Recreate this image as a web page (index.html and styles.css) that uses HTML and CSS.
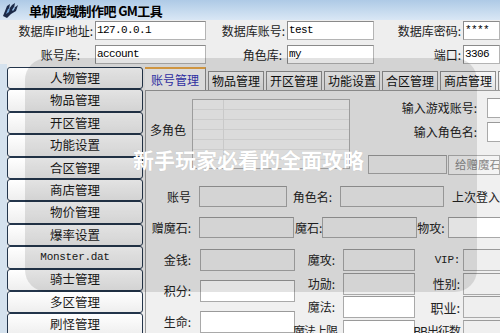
FILE: index.html
```html
<!DOCTYPE html>
<html lang="zh">
<head>
<meta charset="utf-8">
<title>单机魔域制作吧 GM工具</title>
<link rel="stylesheet" href="styles.css">
</head>
<body>
<div class="win">
  <div class="titlebar">
    <svg class="logo" width="18" height="17" viewBox="0 0 18 17">
      <path d="M1 14 L5 4 L8 2 L7 7 L10 3 L13 1 L12 6 L16 3 L14 9 L9 12 L5 16 Z" fill="#1c2a48"/>
      <path d="M4 12 L6 7 L8 6 L7 10 Z" fill="#6fa3d8"/>
      <path d="M10 8 L12 5 L13 6 L11 9 Z" fill="#9cc4ec"/>
    </svg>
    <span class="ttl">单机魔域制作吧 GM工具</span>
  </div>

  <div class="dbform">
    <span class="lbl">数据库IP地址:</span>
    <div class="tb">127.0.0.1</div>
    <span class="lbl">数据库账号:</span>
    <div class="tb">test</div>
    <span class="lbl">数据库密码:</span>
    <div class="tb">****</div>
    <span class="lbl lbl-short">账号库:</span>
    <div class="tb">account</div>
    <span class="lbl lbl-r2">角色库:</span>
    <div class="tb">my</div>
    <span class="lbl">端口:</span>
    <div class="tb">3306</div>
  </div>

  <div class="main">
    <div class="side">
      <div class="sbtn">人物管理</div>
      <div class="sbtn">物品管理</div>
      <div class="sbtn">开区管理</div>
      <div class="sbtn">功能设置</div>
      <div class="sbtn">合区管理</div>
      <div class="sbtn">商店管理</div>
      <div class="sbtn">物价管理</div>
      <div class="sbtn">爆率设置</div>
      <div class="sbtn mono">Monster.dat</div>
      <div class="sbtn">骑士管理</div>
      <div class="sbtn">多区管理</div>
      <div class="sbtn">刷怪管理</div>
    </div>

    <div class="tabs">
      <div class="tabstrip">
        <div class="tab on">账号管理</div>
        <div class="tab">物品管理</div>
        <div class="tab">开区管理</div>
        <div class="tab">功能设置</div>
        <div class="tab">合区管理</div>
        <div class="tab">商店管理</div>
        <div class="tab tab-more"></div>
      </div>
      <div class="panel">
        <div class="top">
          <div class="multi">
            <span class="multi-lbl">多角色</span>
            <div class="listbox"></div>
          </div>
          <div class="search">
            <div class="srow"><span class="slbl">输入游戏账号:</span><div class="in w sin"></div></div>
            <div class="srow"><span class="slbl">输入角色名:</span><div class="in w sin"></div></div>
            <div class="gift">
              <div class="in gin"></div>
              <div class="gbtn">给赠魔石</div>
            </div>
          </div>
        </div>

        <div class="row r-acc">
          <span class="l1">账号</span>
          <div class="in a1"></div>
          <span class="l2">角色名:</span>
          <div class="in a2"></div>
          <span class="l3">上次登入</span>
        </div>

        <div class="row r-gem">
          <span class="l1">赠魔石:</span>
          <div class="in g1"></div>
          <span class="lg2">魔石:</span>
          <div class="in g2"></div>
          <span class="lg3">物攻:</span>
          <div class="in w g3"></div>
        </div>

        <div class="stats">
          <div class="lcol">
            <div class="lrow"><span class="l1">金钱:</span><div class="in s1"></div></div>
            <div class="lrow"><span class="l1">积分:</span><div class="in w s1"></div></div>
            <div class="lrow"><span class="l1">生命:</span><div class="in w s1"></div></div>
          </div>
          <div class="rcol">
            <div class="rrow"><span class="m1">魔攻:</span><div class="in m2"></div><span class="m3 mono">VIP:</span><div class="in m4"></div></div>
            <div class="rrow"><span class="m1">功勋:</span><div class="in m2"></div><span class="m3">性别:</span><div class="in m4"></div></div>
            <div class="rrow"><span class="m1">魔法:</span><div class="in w m2"></div><span class="m3 big">职业:</span><div class="in m4"></div></div>
            <div class="rrow"><span class="m1 tight">魔法上限</span><div class="in w m2"></div><span class="m3 tight">BB出征数</span><div class="in m4"></div></div>
          </div>
        </div>
      </div>
    </div>
  </div>

  <div class="shade"></div>
  <div class="promo">新手玩家必看的全面攻略</div>
</div>
</body>
</html>
```

FILE: styles.css
```css
html, body {
  margin: 0;
  padding: 0;
  width: 500px;
  height: 333px;
  overflow: hidden;
}

body {
  font-family: "Noto Sans CJK SC", "Liberation Sans", sans-serif;
  font-size: 12px;
  line-height: 1;
  color: #111;
  background: #f0f0f0;
}

.win {
  position: relative;
  width: 500px;
  height: 333px;
  overflow: hidden;
  background: #eeeeee;
}

/* title bar */
.titlebar {
  height: 20px;
  display: flex;
  align-items: center;
  gap: 9px;
  padding-left: 2px;
  background: linear-gradient(#aecae6, #d9e7f5);
}

.logo {
  flex-shrink: 0;
}

.ttl {
  font-weight: 700;
  font-size: 13px;
  letter-spacing: -0.6px;
  color: #000;
}

/* database form */
.dbform {
  display: grid;
  grid-template-columns: 95px 111px 81px 87px 89px 1fr;
  grid-template-rows: 19px 19px;
  row-gap: 5px;
  margin-top: 1px;
}

.lbl {
  align-self: center;
  text-align: right;
  padding-right: 2px;
  white-space: nowrap;
  color: #222;
}

.lbl-short {
  padding-right: 15px;
}

.lbl-r2 {
  padding-right: 5px;
}

.tb {
  box-sizing: border-box;
  display: flex;
  align-items: center;
  padding-left: 1px;
  background: #fff;
  border: 1px solid #b4b4b4;
  border-top-color: #8a8a8a;
  border-left-color: #8a8a8a;
  font-family: "Liberation Mono", monospace;
  font-size: 11px;
  letter-spacing: -0.6px;
  color: #000;
  white-space: nowrap;
  overflow: hidden;
}

/* main area */
.main {
  display: flex;
  gap: 2px;
  height: 269px;
}

.side {
  flex-shrink: 0;
  width: 143px;
  box-sizing: border-box;
  padding: 3px 0 0 7px;
  background: linear-gradient(to right, #d5e2ee 0, #d5e2ee 7px, transparent 7px);
}

.sbtn {
  box-sizing: border-box;
  width: 136px;
  height: 22.4px;
  display: flex;
  align-items: center;
  justify-content: center;
  border: 1px solid #24364c;
  border-radius: 3px;
  background: linear-gradient(#ffffff, #eeeeee);
  font-size: 12.5px;
  color: #1a1a1a;
}

.mono {
  font-family: "Liberation Mono", monospace;
  font-size: 11px;
  letter-spacing: -0.3px;
}

/* tabs */
.tabs {
  flex: 1;
  min-width: 0;
  display: flex;
  flex-direction: column;
}

.tabstrip {
  display: flex;
  align-items: flex-end;
  height: 26px;
  flex-shrink: 0;
  overflow: hidden;
}

.tab {
  flex-shrink: 0;
  box-sizing: border-box;
  height: 19px;
  padding: 0 3px;
  margin-right: 2px;
  display: flex;
  align-items: center;
  border: 1px solid #8e8e8e;
  border-bottom: none;
  background: linear-gradient(#f7f7f7, #e3e3e3);
  font-size: 12px;
  color: #111;
}

.tab-more {
  width: 40px;
}

.tab.on {
  height: 23px;
  padding: 0 6px;
  margin-left: -1px;
  border-top: 2px solid #e9a848;
  background: #f6f6f6;
  color: #3434b4;
}

.panel {
  flex: 1;
  overflow: hidden;
  border-top: 1px solid #9a9a9a;
  border-left: 1px solid #9a9a9a;
  background: #f0f0f0;
}

/* top section */
.top {
  display: flex;
  height: 84px;
  margin-top: 5px;
}

.multi {
  display: flex;
  flex-shrink: 0;
}

.multi-lbl {
  box-sizing: border-box;
  width: 46px;
  height: 56px;
  padding: 12px 0 0 4px;
  display: flex;
  align-items: center;
  color: #222;
}

.listbox {
  box-sizing: border-box;
  width: 158px;
  height: 70px;
  margin-top: 3px;
  border: 1px solid #b0b0b0;
  background:
    linear-gradient(to right, transparent 30px, #e2e2e2 30px, #e2e2e2 31px, transparent 31px),
    repeating-linear-gradient(to bottom, transparent 0, transparent 9px, #e6e6e6 9px, #e6e6e6 10px),
    #f7f7f7;
}

.search {
  flex-shrink: 0;
  margin-left: 10px;
  margin-top: 2px;
  display: flex;
  flex-direction: column;
  gap: 4px;
}

.srow {
  display: flex;
  align-items: center;
  height: 20px;
}

.slbl {
  width: 117px;
  text-align: right;
  color: #222;
  white-space: nowrap;
}

.sin {
  width: 60px;
  height: 20px;
  margin-left: 10px;
}

.gift {
  display: flex;
  margin-top: 9px;
  margin-left: 8px;
  height: 19px;
}

.gin {
  width: 79px;
  height: 19px;
}

.gbtn {
  box-sizing: border-box;
  width: 52px;
  height: 20px;
  margin-left: 1px;
  padding-left: 6px;
  display: flex;
  align-items: center;
  overflow: hidden;
  white-space: nowrap;
  border: 1px solid #b0b0b0;
  background: #f4f4f4;
  color: #8a8a8a;
  font-size: 11.5px;
}

/* inputs */
.in {
  box-sizing: border-box;
  flex-shrink: 0;
  border: 1px solid #a9a9a9;
  border-top-color: #9a9a9a;
  background: #efefef;
}

.in.w {
  background: #ffffff;
}

/* rows */
.row {
  display: flex;
  align-items: center;
  height: 21px;
}

.r-acc {
  margin-top: 6px;
}

.r-gem {
  margin-top: 10px;
}

.l1 {
  flex-shrink: 0;
  width: 45px;
  text-align: right;
  color: #222;
  white-space: nowrap;
}

.a1 {
  width: 88px;
  height: 21px;
  margin-left: 8px;
}

.l2 {
  width: 48px;
  text-align: right;
  padding-right: 2px;
  color: #222;
  white-space: nowrap;
}

.a2 {
  width: 104px;
  height: 21px;
  margin-left: 6px;
}

.l3 {
  margin-left: 8px;
  white-space: nowrap;
  color: #222;
}

.g1 {
  width: 95px;
  height: 21px;
  margin-left: 8px;
}

.lg2 {
  width: 33px;
  padding-left: 1px;
  box-sizing: border-box;
  color: #222;
  white-space: nowrap;
}

.g2 {
  width: 95px;
  height: 21px;
}

.lg3 {
  width: 38px;
  text-align: right;
  color: #222;
  white-space: nowrap;
}

.g3 {
  width: 60px;
  height: 21px;
  margin-left: 3px;
}

/* stats */
.stats {
  display: flex;
  margin-top: 11px;
}

.lcol {
  flex-shrink: 0;
  width: 149px;
  display: flex;
  flex-direction: column;
  gap: 9px;
}

.lrow {
  display: flex;
  align-items: center;
  height: 22px;
}

.s1 {
  width: 95px;
  height: 22px;
  margin-left: 9px;
}

.rcol {
  display: flex;
  flex-direction: column;
  gap: 1.5px;
}

.rrow {
  display: flex;
  align-items: center;
  height: 22px;
}

.m1 {
  flex-shrink: 0;
  width: 42px;
  box-sizing: border-box;
  padding-right: 2px;
  display: flex;
  justify-content: flex-end;
  color: #222;
  white-space: nowrap;
}

.m2 {
  width: 72px;
  height: 22px;
  margin-left: 6px;
}

.m3 {
  flex-shrink: 0;
  width: 45px;
  display: flex;
  justify-content: flex-end;
  color: #222;
  white-space: nowrap;
}

.tight {
  letter-spacing: -1px;
}

.m1.tight {
  padding-right: 0;
}

.m3.mono {
  font-size: 11px;
}

.m3.big {
  font-size: 13px;
}

.m4 {
  width: 60px;
  height: 22px;
  margin-left: 3px;
}

/* overlays */
.shade {
  position: absolute;
  left: 25px;
  top: 58px;
  width: 452px;
  height: 234px;
  border-radius: 22px;
  background: rgba(0, 0, 0, 0.11);
  pointer-events: none;
}

.promo {
  position: absolute;
  left: 133px;
  top: 147px;
  font-size: 21px;
  line-height: 24px;
  font-weight: 700;
  color: #ffffff;
  white-space: nowrap;
  text-shadow: 0 0 1px rgba(0, 0, 0, 0.15);
}
```
